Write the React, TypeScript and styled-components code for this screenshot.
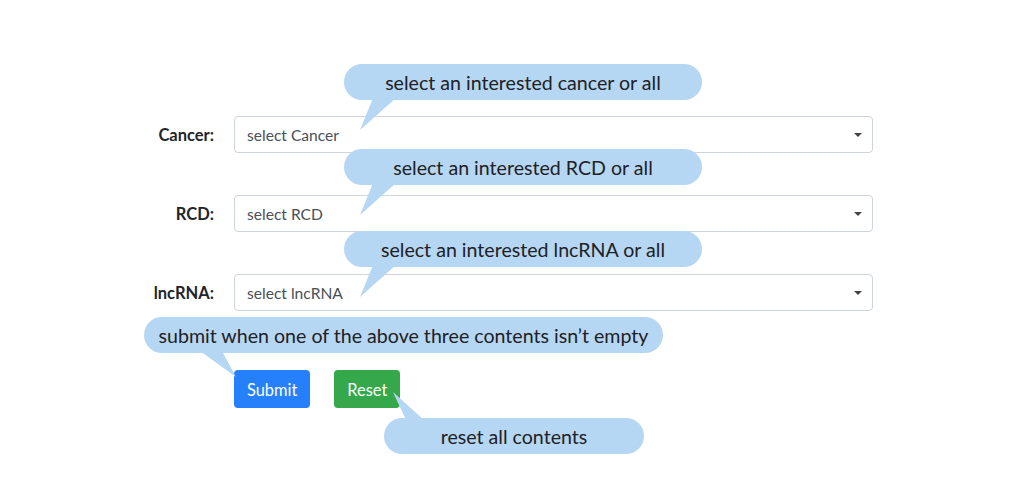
import styled, { createGlobalStyle } from "styled-components";

const GlobalStyle = createGlobalStyle`
    body {
        margin: 0;
        background: #fff;
        font-family: "Lato", "Open Sans", sans-serif;
        color: #212529;
    }
`

const Page = styled.div`
    width: 1024px;
    height: 480px;
    padding-top: 116px;
    box-sizing: border-box;
`

const Form = styled.div`
    display: grid;
    grid-template-columns: 214px 639px;
    column-gap: 20px;
    row-gap: 42px;
    align-items: center;
`

const Label = styled.label`
    text-align: right;
    font-size: 16.5px;
    font-weight: 700;
    color: #212529;
`

const Field = styled.div`
    position: relative;
    height: 37px;
`

const Select = styled.div`
    height: 37px;
    box-sizing: border-box;
    border: 1px solid #ced4da;
    border-radius: 4px;
    display: flex;
    align-items: center;
    justify-content: space-between;
    padding: 0 10px 0 12px;
    font-size: 15.6px;
    color: #495057;
    background: #fff;
`

const Caret = styled.span`
    width: 0;
    height: 0;
    border-left: 4px solid transparent;
    border-right: 4px solid transparent;
    border-top: 4px solid #444;
`

const Buttons = styled.div`
    position: relative;
    display: flex;
    gap: 24px;
    margin-top: 17px;
`

const Button = styled.button<{ $color: string }>`
    height: 38px;
    padding: 0 13px;
    border: none;
    border-radius: 4px;
    background: ${(p) => p.$color};
    color: #fff;
    font-family: inherit;
    font-size: 16.4px;
`

const Bubble = styled.div<{ $top: number; $left: number; $width: number }>`
    position: absolute;
    top: ${(p) => p.$top}px;
    left: ${(p) => p.$left}px;
    width: ${(p) => p.$width}px;
    height: 36px;
    border-radius: 18px;
    background: #b6d7f3;
    display: flex;
    align-items: center;
    justify-content: center;
    font-size: 19.6px;
    color: #1e2125;
    white-space: nowrap;
    z-index: 2;
`

const Tail = styled.svg`
    position: absolute;
    overflow: visible;
    left: 0;
    top: 0;
    pointer-events: none;
`

interface Hint {
    text: string;
    top: number;
    left: number;
    width: number;
    tail: string;
}

const HintBubble = ({ text, top, left, width, tail }: Hint) => (
    <Bubble $top={top} $left={left} $width={width}>
        <Tail width="1" height="1">
            <polygon points={tail} fill="#b6d7f3" />
        </Tail>
        {text}
    </Bubble>
)

const fields = [
    { label: "Cancer:", placeholder: "select Cancer", hint: "select an interested cancer or all", top: -52 },
    { label: "RCD:", placeholder: "select RCD", hint: "select an interested RCD or all", top: -46 },
    { label: "lncRNA:", placeholder: "select lncRNA", hint: "select an interested lncRNA or all", top: -43 },
];

const App = () => {
    return (
        <>
            <GlobalStyle />
            <Page>
                <Form>
                    {fields.map((f) => (
                        <>
                            <Label key={f.label + "l"}>{f.label}</Label>
                            <Field key={f.label}>
                                <Select>
                                    {f.placeholder}
                                    <Caret />
                                </Select>
                                <HintBubble text={f.hint} top={f.top} left={110} width={358}
                                    tail="29,34 52,34 16,66" />
                            </Field>
                        </>
                    ))}
                    <span />
                    <Buttons>
                        <Button $color="#2680fb">Submit</Button>
                        <Button $color="#34a84a">Reset</Button>
                        <HintBubble text="submit when one of the above three contents isn’t empty"
                            top={-53} left={-90} width={519} tail="56,34 78,34 92,60" />
                        <HintBubble text="reset all contents" top={48} left={150} width={260}
                            tail="22,2 40,2 9,-26" />
                    </Buttons>
                </Form>
            </Page>
        </>
    )
}

export default App;
